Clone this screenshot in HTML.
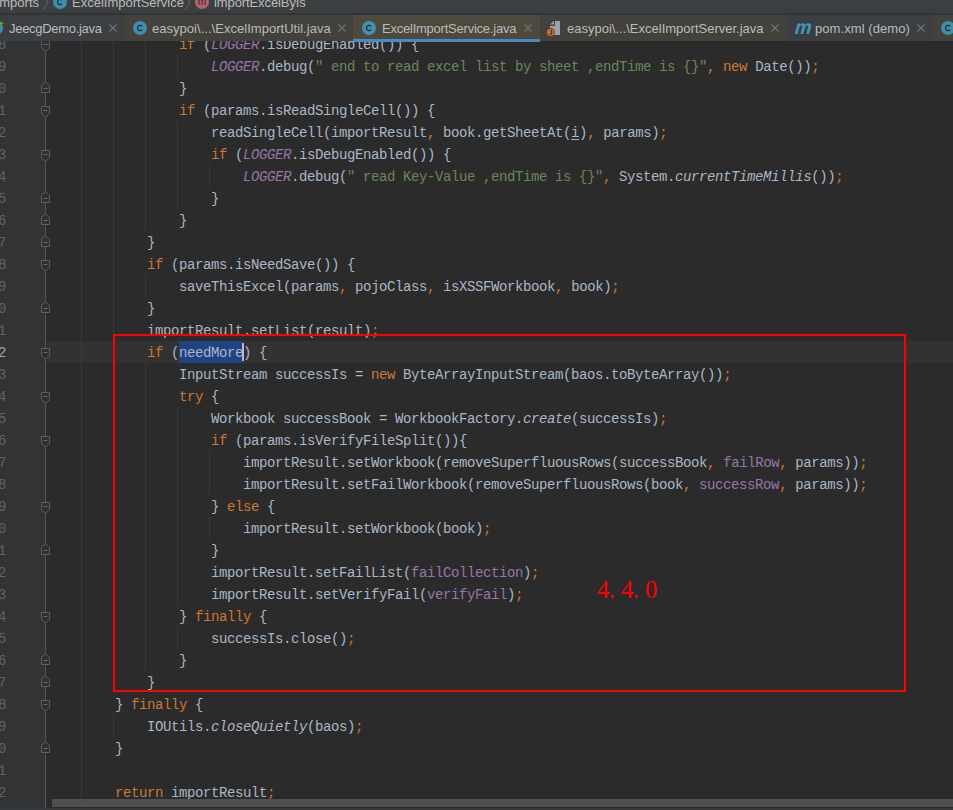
<!DOCTYPE html>
<html><head><meta charset="utf-8"><style>
html,body{margin:0;padding:0;width:953px;height:810px;overflow:hidden;background:#2B2B2B}
#root{position:relative;width:953px;height:810px;overflow:hidden;background:#2B2B2B}
#root div,#root svg{position:absolute}
.ln{font-family:"Liberation Mono",monospace;font-size:14px;letter-spacing:-0.4px;line-height:22px;white-space:pre;color:#A9B7C6}
.ln b{font-weight:normal}
.ln i{font-style:italic}
.ln u{text-decoration:underline;text-underline-offset:2px}
.k{color:#CC7832}
.s{color:#6A8759}
.f{color:#9876AA}
.sf{color:#9876AA}
.num{left:-2px;width:9px;font-family:"Liberation Mono",monospace;font-size:14px;line-height:22px;color:#606366;text-align:left}
.num.cur{color:#A4A3A3}
.v{font-family:"Liberation Serif",serif;font-size:24.5px;line-height:30px;color:#FF0000}
.bc{font-size:12.5px}
.ui{font-family:"Liberation Sans",sans-serif;font-size:13px;white-space:pre;color:#BBBBBB;line-height:16px}
</style></head><body><div id="root">
<div style="left:0;top:0;width:46px;height:810px;background:#313335"></div>
<div style="left:46px;top:341px;width:907px;height:22px;background:#323232"></div>
<div style="left:179px;top:341px;width:64px;height:22px;background:#214283"></div>
<div style="left:81px;top:42px;width:1px;height:768px;background:#393939"></div>
<div style="left:113px;top:42px;width:1px;height:651px;background:#393939"></div>
<div style="left:113px;top:715px;width:1px;height:22px;background:#393939"></div>
<div style="left:145px;top:42px;width:1px;height:189px;background:#393939"></div>
<div style="left:145px;top:275px;width:1px;height:22px;background:#393939"></div>
<div style="left:145px;top:363px;width:1px;height:308px;background:#393939"></div>
<div style="left:177px;top:55px;width:1px;height:22px;background:#393939"></div>
<div style="left:177px;top:121px;width:1px;height:88px;background:#393939"></div>
<div style="left:177px;top:407px;width:1px;height:198px;background:#393939"></div>
<div style="left:177px;top:627px;width:1px;height:22px;background:#393939"></div>
<div style="left:209px;top:165px;width:1px;height:22px;background:#393939"></div>
<div style="left:209px;top:451px;width:1px;height:44px;background:#393939"></div>
<div style="left:209px;top:517px;width:1px;height:22px;background:#393939"></div>
<div class=ln style="left:179px;top:34px"><b class=k>if</b> (<i class=sf>LOGGER</i>.isDebugEnabled()) {</div>
<div class=ln style="left:211px;top:56px"><i class=sf>LOGGER</i>.debug(<b class=s>" end to read excel list by sheet ,endTime is {}"</b><b class=k>, new</b> Date())<b class=k>;</b></div>
<div class=ln style="left:179px;top:78px">}</div>
<div class=ln style="left:179px;top:100px"><b class=k>if</b> (params.isReadSingleCell()) {</div>
<div class=ln style="left:211px;top:122px">readSingleCell(importResult<b class=k>,</b> book.getSheetAt(<u>i</u>)<b class=k>,</b> params)<b class=k>;</b></div>
<div class=ln style="left:211px;top:144px"><b class=k>if</b> (<i class=sf>LOGGER</i>.isDebugEnabled()) {</div>
<div class=ln style="left:243px;top:166px"><i class=sf>LOGGER</i>.debug(<b class=s>" read Key-Value ,endTime is {}"</b><b class=k>,</b> System.<i>currentTimeMillis</i>())<b class=k>;</b></div>
<div class=ln style="left:211px;top:188px">}</div>
<div class=ln style="left:179px;top:210px">}</div>
<div class=ln style="left:147px;top:232px">}</div>
<div class=ln style="left:147px;top:254px"><b class=k>if</b> (params.isNeedSave()) {</div>
<div class=ln style="left:179px;top:276px">saveThisExcel(params<b class=k>,</b> pojoClass<b class=k>,</b> isXSSFWorkbook<b class=k>,</b> book)<b class=k>;</b></div>
<div class=ln style="left:147px;top:298px">}</div>
<div class=ln style="left:147px;top:320px">importResult.setList(result)<b class=k>;</b></div>
<div class=ln style="left:147px;top:342px"><b class=k>if</b> (needMore) {</div>
<div class=ln style="left:179px;top:364px">InputStream successIs = <b class=k>new</b> ByteArrayInputStream(baos.toByteArray())<b class=k>;</b></div>
<div class=ln style="left:179px;top:386px"><b class=k>try</b> {</div>
<div class=ln style="left:211px;top:408px">Workbook successBook = WorkbookFactory.<i>create</i>(successIs)<b class=k>;</b></div>
<div class=ln style="left:211px;top:430px"><b class=k>if</b> (params.isVerifyFileSplit()){</div>
<div class=ln style="left:243px;top:452px">importResult.setWorkbook(removeSuperfluousRows(successBook<b class=k>,</b> <b class=f>failRow</b><b class=k>,</b> params))<b class=k>;</b></div>
<div class=ln style="left:243px;top:474px">importResult.setFailWorkbook(removeSuperfluousRows(book<b class=k>,</b> <b class=f>successRow</b><b class=k>,</b> params))<b class=k>;</b></div>
<div class=ln style="left:211px;top:496px">} <b class=k>else</b> {</div>
<div class=ln style="left:243px;top:518px">importResult.setWorkbook(book)<b class=k>;</b></div>
<div class=ln style="left:211px;top:540px">}</div>
<div class=ln style="left:211px;top:562px">importResult.setFailList(<b class=f>failCollection</b>)<b class=k>;</b></div>
<div class=ln style="left:211px;top:584px">importResult.setVerifyFail(<b class=f>verifyFail</b>)<b class=k>;</b></div>
<div class=ln style="left:179px;top:606px">} <b class=k>finally</b> {</div>
<div class=ln style="left:211px;top:628px">successIs.close()<b class=k>;</b></div>
<div class=ln style="left:179px;top:650px">}</div>
<div class=ln style="left:147px;top:672px">}</div>
<div class=ln style="left:115px;top:694px">} <b class=k>finally</b> {</div>
<div class=ln style="left:147px;top:716px">IOUtils.<i>closeQuietly</i>(baos)<b class=k>;</b></div>
<div class=ln style="left:115px;top:738px">}</div>
<div class=ln style="left:115px;top:782px"><b class=k>return</b> importResult<b class=k>;</b></div>
<div style="left:242px;top:343px;width:2px;height:18px;background:#BBBBBB"></div>
<div class="num" style="top:34px">8</div>
<div class="num" style="top:56px">9</div>
<div class="num" style="top:78px">0</div>
<div class="num" style="top:100px">1</div>
<div class="num" style="top:122px">2</div>
<div class="num" style="top:144px">3</div>
<div class="num" style="top:166px">4</div>
<div class="num" style="top:188px">5</div>
<div class="num" style="top:210px">6</div>
<div class="num" style="top:232px">7</div>
<div class="num" style="top:254px">8</div>
<div class="num" style="top:276px">9</div>
<div class="num" style="top:298px">0</div>
<div class="num" style="top:320px">1</div>
<div class="num cur" style="top:342px">2</div>
<div class="num" style="top:364px">3</div>
<div class="num" style="top:386px">4</div>
<div class="num" style="top:408px">5</div>
<div class="num" style="top:430px">6</div>
<div class="num" style="top:452px">7</div>
<div class="num" style="top:474px">8</div>
<div class="num" style="top:496px">9</div>
<div class="num" style="top:518px">0</div>
<div class="num" style="top:540px">1</div>
<div class="num" style="top:562px">2</div>
<div class="num" style="top:584px">3</div>
<div class="num" style="top:606px">4</div>
<div class="num" style="top:628px">5</div>
<div class="num" style="top:650px">6</div>
<div class="num" style="top:672px">7</div>
<div class="num" style="top:694px">8</div>
<div class="num" style="top:716px">9</div>
<div class="num" style="top:738px">0</div>
<div class="num" style="top:760px">1</div>
<div class="num" style="top:782px">2</div>
<div style="left:45px;top:41px;width:1px;height:767px;background:#555555"></div>
<svg style="left:41px;top:34px" width="10" height="20" viewBox="0 -10 10 20"><polygon points="0.5,-3.5 8.5,-3.5 8.5,3.5 4.5,7.5 0.5,3.5" fill="#2F3032" stroke="#5E5E5E" stroke-width="1"/><line x1="2.5" y1="0.5" x2="6.5" y2="0.5" stroke="#6A6A6A" stroke-width="1"/></svg>
<svg style="left:41px;top:100px" width="10" height="20" viewBox="0 -10 10 20"><polygon points="0.5,-3.5 8.5,-3.5 8.5,3.5 4.5,7.5 0.5,3.5" fill="#2F3032" stroke="#5E5E5E" stroke-width="1"/><line x1="2.5" y1="0.5" x2="6.5" y2="0.5" stroke="#6A6A6A" stroke-width="1"/></svg>
<svg style="left:41px;top:144px" width="10" height="20" viewBox="0 -10 10 20"><polygon points="0.5,-3.5 8.5,-3.5 8.5,3.5 4.5,7.5 0.5,3.5" fill="#2F3032" stroke="#5E5E5E" stroke-width="1"/><line x1="2.5" y1="0.5" x2="6.5" y2="0.5" stroke="#6A6A6A" stroke-width="1"/></svg>
<svg style="left:41px;top:254px" width="10" height="20" viewBox="0 -10 10 20"><polygon points="0.5,-3.5 8.5,-3.5 8.5,3.5 4.5,7.5 0.5,3.5" fill="#2F3032" stroke="#5E5E5E" stroke-width="1"/><line x1="2.5" y1="0.5" x2="6.5" y2="0.5" stroke="#6A6A6A" stroke-width="1"/></svg>
<svg style="left:41px;top:342px" width="10" height="20" viewBox="0 -10 10 20"><polygon points="0.5,-3.5 8.5,-3.5 8.5,3.5 4.5,7.5 0.5,3.5" fill="#2F3032" stroke="#5E5E5E" stroke-width="1"/><line x1="2.5" y1="0.5" x2="6.5" y2="0.5" stroke="#6A6A6A" stroke-width="1"/></svg>
<svg style="left:41px;top:386px" width="10" height="20" viewBox="0 -10 10 20"><polygon points="0.5,-3.5 8.5,-3.5 8.5,3.5 4.5,7.5 0.5,3.5" fill="#2F3032" stroke="#5E5E5E" stroke-width="1"/><line x1="2.5" y1="0.5" x2="6.5" y2="0.5" stroke="#6A6A6A" stroke-width="1"/></svg>
<svg style="left:41px;top:430px" width="10" height="20" viewBox="0 -10 10 20"><polygon points="0.5,-3.5 8.5,-3.5 8.5,3.5 4.5,7.5 0.5,3.5" fill="#2F3032" stroke="#5E5E5E" stroke-width="1"/><line x1="2.5" y1="0.5" x2="6.5" y2="0.5" stroke="#6A6A6A" stroke-width="1"/></svg>
<svg style="left:41px;top:496px" width="10" height="20" viewBox="0 -10 10 20"><polygon points="0.5,-3.5 8.5,-3.5 8.5,3.5 4.5,7.5 0.5,3.5" fill="#2F3032" stroke="#5E5E5E" stroke-width="1"/><line x1="2.5" y1="0.5" x2="6.5" y2="0.5" stroke="#6A6A6A" stroke-width="1"/></svg>
<svg style="left:41px;top:606px" width="10" height="20" viewBox="0 -10 10 20"><polygon points="0.5,-3.5 8.5,-3.5 8.5,3.5 4.5,7.5 0.5,3.5" fill="#2F3032" stroke="#5E5E5E" stroke-width="1"/><line x1="2.5" y1="0.5" x2="6.5" y2="0.5" stroke="#6A6A6A" stroke-width="1"/></svg>
<svg style="left:41px;top:694px" width="10" height="20" viewBox="0 -10 10 20"><polygon points="0.5,-3.5 8.5,-3.5 8.5,3.5 4.5,7.5 0.5,3.5" fill="#2F3032" stroke="#5E5E5E" stroke-width="1"/><line x1="2.5" y1="0.5" x2="6.5" y2="0.5" stroke="#6A6A6A" stroke-width="1"/></svg>
<svg style="left:41px;top:78px" width="10" height="20" viewBox="0 -10 10 20"><polygon points="0.5,4.5 8.5,4.5 8.5,-2.5 4.5,-6.5 0.5,-2.5" fill="#2F3032" stroke="#5E5E5E" stroke-width="1"/><line x1="2.5" y1="0.5" x2="6.5" y2="0.5" stroke="#6A6A6A" stroke-width="1"/></svg>
<svg style="left:41px;top:188px" width="10" height="20" viewBox="0 -10 10 20"><polygon points="0.5,4.5 8.5,4.5 8.5,-2.5 4.5,-6.5 0.5,-2.5" fill="#2F3032" stroke="#5E5E5E" stroke-width="1"/><line x1="2.5" y1="0.5" x2="6.5" y2="0.5" stroke="#6A6A6A" stroke-width="1"/></svg>
<svg style="left:41px;top:210px" width="10" height="20" viewBox="0 -10 10 20"><polygon points="0.5,4.5 8.5,4.5 8.5,-2.5 4.5,-6.5 0.5,-2.5" fill="#2F3032" stroke="#5E5E5E" stroke-width="1"/><line x1="2.5" y1="0.5" x2="6.5" y2="0.5" stroke="#6A6A6A" stroke-width="1"/></svg>
<svg style="left:41px;top:232px" width="10" height="20" viewBox="0 -10 10 20"><polygon points="0.5,4.5 8.5,4.5 8.5,-2.5 4.5,-6.5 0.5,-2.5" fill="#2F3032" stroke="#5E5E5E" stroke-width="1"/><line x1="2.5" y1="0.5" x2="6.5" y2="0.5" stroke="#6A6A6A" stroke-width="1"/></svg>
<svg style="left:41px;top:298px" width="10" height="20" viewBox="0 -10 10 20"><polygon points="0.5,4.5 8.5,4.5 8.5,-2.5 4.5,-6.5 0.5,-2.5" fill="#2F3032" stroke="#5E5E5E" stroke-width="1"/><line x1="2.5" y1="0.5" x2="6.5" y2="0.5" stroke="#6A6A6A" stroke-width="1"/></svg>
<svg style="left:41px;top:540px" width="10" height="20" viewBox="0 -10 10 20"><polygon points="0.5,4.5 8.5,4.5 8.5,-2.5 4.5,-6.5 0.5,-2.5" fill="#2F3032" stroke="#5E5E5E" stroke-width="1"/><line x1="2.5" y1="0.5" x2="6.5" y2="0.5" stroke="#6A6A6A" stroke-width="1"/></svg>
<svg style="left:41px;top:650px" width="10" height="20" viewBox="0 -10 10 20"><polygon points="0.5,4.5 8.5,4.5 8.5,-2.5 4.5,-6.5 0.5,-2.5" fill="#2F3032" stroke="#5E5E5E" stroke-width="1"/><line x1="2.5" y1="0.5" x2="6.5" y2="0.5" stroke="#6A6A6A" stroke-width="1"/></svg>
<svg style="left:41px;top:672px" width="10" height="20" viewBox="0 -10 10 20"><polygon points="0.5,4.5 8.5,4.5 8.5,-2.5 4.5,-6.5 0.5,-2.5" fill="#2F3032" stroke="#5E5E5E" stroke-width="1"/><line x1="2.5" y1="0.5" x2="6.5" y2="0.5" stroke="#6A6A6A" stroke-width="1"/></svg>
<svg style="left:41px;top:738px" width="10" height="20" viewBox="0 -10 10 20"><polygon points="0.5,4.5 8.5,4.5 8.5,-2.5 4.5,-6.5 0.5,-2.5" fill="#2F3032" stroke="#5E5E5E" stroke-width="1"/><line x1="2.5" y1="0.5" x2="6.5" y2="0.5" stroke="#6A6A6A" stroke-width="1"/></svg>
<!-- breadcrumbs -->
<div style="left:0;top:0;width:953px;height:13px;background:#3C3F41"></div>
<div style="left:0;top:13px;width:953px;height:2px;background:#313335"></div>
<div class="ui bc" style="left:-40px;top:-5px;width:79px;text-align:right">imports</div>
<svg style="left:40px;top:-4px" width="12" height="16" viewBox="0 0 12 16"><polyline points="3.5,-1 8,6 3.5,13.5" fill="none" stroke="#5E6060" stroke-width="1.1"/></svg>
<svg style="left:52px;top:-6px" width="16" height="16" viewBox="0 0 16 16"><circle cx="8" cy="8" r="7" fill="#3E8DAA"/><path d="M10.1,6.3 A2.6,2.6 0 1 0 10.1,9.7" fill="none" stroke="#22262A" stroke-width="1.15"/></svg>
<div class="ui bc" style="left:72px;top:-5px;letter-spacing:0px">ExcelImportService</div>
<svg style="left:182px;top:-4px" width="12" height="16" viewBox="0 0 12 16"><polyline points="3.5,-1 8,6 3.5,13.5" fill="none" stroke="#5E6060" stroke-width="1.1"/></svg>
<svg style="left:194px;top:-6px" width="16" height="16" viewBox="0 0 16 16"><circle cx="8" cy="8" r="7" fill="#B5606F"/><text x="8" y="11" text-anchor="middle" font-family="Liberation Sans" font-size="10" fill="#2B2B2B">m</text></svg>
<div class="ui bc" style="left:214px;top:-5px;letter-spacing:-0.1px">importExcelByIs</div>
<!-- tab bar -->
<div style="left:0;top:15px;width:953px;height:26px;background:#3C3F41"></div>
<div style="left:124px;top:15px;width:229px;height:26px;background:#42413C"></div>
<div style="left:353px;top:15px;width:187px;height:26px;background:#4D493C"></div>
<div style="left:540px;top:15px;width:247px;height:26px;background:#42413C"></div>
<div style="left:932px;top:15px;width:21px;height:26px;background:#42413C"></div>
<div style="left:353px;top:39px;width:187px;height:3px;background:#4A88C7"></div>
<!-- tab1 -->
<svg style="left:-12px;top:20px" width="18" height="16" viewBox="0 0 18 16"><circle cx="8" cy="8" r="7" fill="#3E8DAA"/><polygon points="11,1 16,3.5 11,6" fill="#59A83A"/></svg>
<div class=ui style="left:9px;top:21px;letter-spacing:-0.3px">JeecgDemo.java</div>
<svg style="left:109px;top:24px" width="8" height="8" viewBox="0 0 8 8"><path d="M0.5,0.5 L7.5,7.5 M7.5,0.5 L0.5,7.5" stroke="#6F7476" stroke-width="1.1"/></svg>
<!-- tab2 -->
<svg style="left:132px;top:20px" width="16" height="16" viewBox="0 0 16 16"><circle cx="8" cy="8" r="7" fill="#3E8DAA"/><path d="M10.1,6.3 A2.6,2.6 0 1 0 10.1,9.7" fill="none" stroke="#22262A" stroke-width="1.15"/></svg>
<div class=ui style="left:152px;top:21px;letter-spacing:0.03px">easypoi\...\ExcelImportUtil.java</div>
<svg style="left:338px;top:24px" width="8" height="8" viewBox="0 0 8 8"><path d="M0.5,0.5 L7.5,7.5 M7.5,0.5 L0.5,7.5" stroke="#6F7476" stroke-width="1.1"/></svg>
<!-- tab3 -->
<svg style="left:361px;top:20px" width="16" height="16" viewBox="0 0 16 16"><circle cx="8" cy="8" r="7" fill="#4591A9"/><path d="M10.1,6.3 A2.6,2.6 0 1 0 10.1,9.7" fill="none" stroke="#22262A" stroke-width="1.15"/></svg>
<div class=ui style="left:382px;top:21px;letter-spacing:-0.23px">ExcelImportService.java</div>
<svg style="left:524px;top:24px" width="8" height="8" viewBox="0 0 8 8"><path d="M0.5,0.5 L7.5,7.5 M7.5,0.5 L0.5,7.5" stroke="#6F7476" stroke-width="1.1"/></svg>
<!-- tab4 -->
<svg style="left:544px;top:18px" width="20" height="20" viewBox="0 0 20 20"><polygon points="6.2,6.5 10,2.8 10,6.5" fill="#9AA3AB"/><rect x="11" y="3" width="5" height="14" fill="#9AA3AB"/><rect x="6" y="8" width="5" height="9" fill="#9AA3AB"/><circle cx="6.5" cy="14.4" r="4.4" fill="#403F3A"/><circle cx="6.5" cy="14.4" r="3.7" fill="#CF6A2E"/><path d="M7.6,11.8 V15.6 Q7.6,16.6 6.4,16.6 H5.3" fill="none" stroke="#3A2418" stroke-width="1"/></svg>
<div class=ui style="left:567px;top:21px">easypoi\...\ExcelImportServer.java</div>
<svg style="left:771px;top:24px" width="8" height="8" viewBox="0 0 8 8"><path d="M0.5,0.5 L7.5,7.5 M7.5,0.5 L0.5,7.5" stroke="#6F7476" stroke-width="1.1"/></svg>
<!-- tab5 -->
<div style="left:794px;top:15px;font-family:'Liberation Sans',sans-serif;font-weight:bold;font-style:italic;font-size:20px;line-height:24px;color:#3E98C1;transform:scaleX(0.93) skewX(-6deg);transform-origin:0 100%">m</div>
<div class=ui style="left:815px;top:21px;letter-spacing:0.07px">pom.xml (demo)</div>
<svg style="left:917px;top:24px" width="8" height="8" viewBox="0 0 8 8"><path d="M0.5,0.5 L7.5,7.5 M7.5,0.5 L0.5,7.5" stroke="#6F7476" stroke-width="1.1"/></svg>
<!-- tab6 -->
<svg style="left:940px;top:20px" width="16" height="16" viewBox="0 0 16 16"><circle cx="8" cy="8" r="7" fill="#3E8DAA"/><path d="M10.1,6.3 A2.6,2.6 0 1 0 10.1,9.7" fill="none" stroke="#22262A" stroke-width="1.15"/></svg>
<!-- scrollbar -->
<div style="left:52px;top:799px;width:901px;height:8px;background:#4F4F4F"></div>
<div style="left:0;top:808px;width:953px;height:2px;background:#373A3D"></div>
<!-- red box -->
<div style="left:113px;top:334px;width:793px;height:358px;box-sizing:border-box;border:2px solid #FF0000"></div>
<div class=v style="left:597px;top:575px">4</div>
<div class=v style="left:609px;top:575px">.</div>
<div class=v style="left:621px;top:575px">4</div>
<div class=v style="left:633px;top:575px">.</div>
<div class=v style="left:645px;top:575px">0</div>
</div></body></html>
